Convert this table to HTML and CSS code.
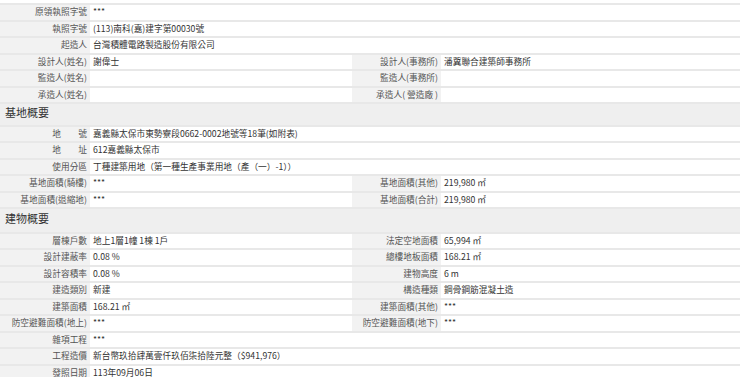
FILE: index.html
```html
<!DOCTYPE html>
<html lang="zh-Hant">
<head>
<meta charset="utf-8">
<link rel="stylesheet" href="styles.css">
</head>
<body>
<table class="lic">
  <colgroup>
    <col class="c-l1"><col class="c-v1"><col class="c-l2"><col class="c-v2">
  </colgroup>
  <tbody>
    <tr><th>原領執照字號</th><td colspan="3">***</td></tr>
    <tr><th>執照字號</th><td colspan="3">(113)南科(嘉)建字第00030號</td></tr>
    <tr><th>起造人</th><td colspan="3">台灣積體電路製造股份有限公司</td></tr>
    <tr><th>設計人(姓名)</th><td>謝偉士</td><th>設計人(事務所)</th><td>潘冀聯合建築師事務所</td></tr>
    <tr><th>監造人(姓名)</th><td></td><th>監造人(事務所)</th><td></td></tr>
    <tr><th>承造人(姓名)</th><td></td><th>承造人( 營造廠 )</th><td></td></tr>
    <tr class="sec"><td colspan="4">基地概要</td></tr>
    <tr><th>地　　號</th><td colspan="3">嘉義縣太保市東勢寮段0662-0002地號等18筆(如附表)</td></tr>
    <tr><th>地　　址</th><td colspan="3">612嘉義縣太保市</td></tr>
    <tr><th>使用分區</th><td colspan="3">丁種建築用地（第一種生產事業用地（產（一）-1））</td></tr>
    <tr><th>基地面積(騎樓)</th><td>***</td><th>基地面積(其他)</th><td>219,980 ㎡</td></tr>
    <tr><th>基地面積(退縮地)</th><td>***</td><th>基地面積(合計)</th><td>219,980 ㎡</td></tr>
    <tr class="sec sec-b"><td colspan="4">建物概要</td></tr>
    <tr><th>層棟戶數</th><td>地上1層1幢 1棟 1戶</td><th>法定空地面積</th><td>65,994 ㎡</td></tr>
    <tr><th>設計建蔽率</th><td>0.08 %</td><th>總樓地板面積</th><td>168.21 ㎡</td></tr>
    <tr><th>設計容積率</th><td>0.08 %</td><th>建物高度</th><td>6 m</td></tr>
    <tr><th>建造類別</th><td>新建</td><th>構造種類</th><td>鋼骨鋼筋混凝土造</td></tr>
    <tr><th>建築面積</th><td>168.21 ㎡</td><th>建築面積(其他)</th><td>***</td></tr>
    <tr><th>防空避難面積(地上)</th><td>***</td><th>防空避難面積(地下)</th><td>***</td></tr>
    <tr><th>雜項工程</th><td colspan="3">***</td></tr>
    <tr><th>工程造價</th><td colspan="3">新台幣玖拾肆萬壹仟玖佰柒拾陸元整（$941,976）</td></tr>
    <tr><th>發照日期</th><td colspan="3">113年09月06日</td></tr>
  </tbody>
</table>
</body>
</html>
```
FILE: styles.css
```css
html, body {
  margin: 0;
  padding: 0;
  background: #ffffff;
}
body {
  padding-top: 3px;
  font-family: "Noto Sans CJK TC", "Noto Sans", sans-serif;
  color: #333333;
}
.lic {
  width: 740px;
  table-layout: fixed;
  border-collapse: separate;
  border-spacing: 0;
}
.c-l1 { width: 90px; }
.c-v1 { width: 262px; }
.c-l2 { width: 89px; }
.c-v2 { width: 299px; }
.lic th,
.lic td {
  height: 14.5px;
  padding: 0;
  border-top: 2px solid #e8e8e8;
  font-size: 8.7px;
  line-height: 14.5px;
  white-space: nowrap;
  overflow: hidden;
  vertical-align: middle;
}
.lic th {
  background: #f2f2f2;
  color: #555555;
  font-weight: normal;
  text-align: right;
  padding-right: 3px;
}
.lic td {
  background: #ffffff;
  text-align: left;
  padding-left: 3px;
}
.lic .sec td {
  height: 17.5px;
  line-height: 17.5px;
  padding-bottom: 3px;
  background: #efefef;
  font-size: 11px;
  color: #333333;
  padding-left: 5px;
}
.lic .sec-b td {
  height: 19.5px;
  line-height: 19.5px;
}
```
